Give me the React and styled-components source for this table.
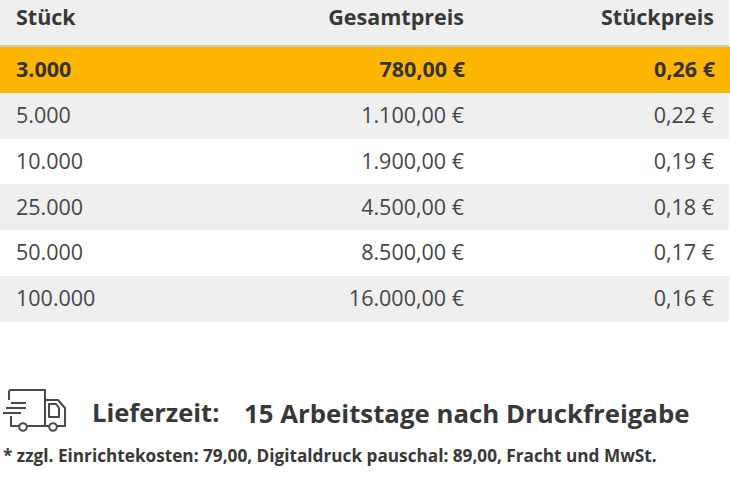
import React from "react";
import styled, { createGlobalStyle } from "styled-components";

const Global = createGlobalStyle`
  html, body { margin: 0; padding: 0; background: #ffffff; }
  body { font-family: "Open Sans", "Noto Sans", "Liberation Sans", sans-serif; color: #3d3d3d; }
`;

const Page = styled.div`
  width: 730px;
  display: flex;
  flex-direction: column;
`;

const Table = styled.div`
  width: 729px;
  display: flex;
  flex-direction: column;
`;

const HeaderRow = styled.div`
  display: grid;
  grid-template-columns: 1fr 250px 250px;
  height: 45px;
  background: #efefef;
  border-bottom: 2px solid #c8c8c8;
  font-weight: 700;
  font-size: 21.5px;
  line-height: 34px;
  color: #383838;
`;

const Row = styled.div`
  display: grid;
  grid-template-columns: 1fr 250px 250px;
  align-items: center;
  height: 45.83px;
  font-size: 21.5px;
  line-height: 1;
  background: ${(p) => (p.$active ? "#ffb600" : p.$shade ? "#efefef" : "#ffffff")};
  font-weight: ${(p) => (p.$active ? 700 : 400)};
  color: ${(p) => (p.$active ? "#333333" : "#464646")};
  width: ${(p) => (p.$active ? "730px" : "auto")};
`;

const Cell = styled.div`
  padding: 0 15px 2px 16px;
  text-align: ${(p) => (p.$right ? "right" : "left")};
  white-space: nowrap;
`;

const Delivery = styled.div`
  display: flex;
  align-items: flex-start;
  margin-top: 63px;
`;

const TruckIcon = styled.svg`
  width: 68px;
  height: 48px;
  flex: none;
`;

const DeliveryLabel = styled.div`
  margin: 10px 0 0 24px;
  font-size: 25.5px;
  font-weight: 700;
  color: #383838;
  width: 152px;
  white-space: nowrap;
`;

const DeliveryValue = styled.div`
  margin-top: 10px;
  font-size: 25.8px;
  font-weight: 700;
  color: #383838;
  white-space: nowrap;
`;

const Footnote = styled.div`
  margin-top: 11px;
  padding-left: 3px;
  font-size: 17.2px;
  font-weight: 700;
  color: #383838;
  white-space: nowrap;
`;

const rows = [
  ["3.000", "780,00 €", "0,26 €"],
  ["5.000", "1.100,00 €", "0,22 €"],
  ["10.000", "1.900,00 €", "0,19 €"],
  ["25.000", "4.500,00 €", "0,18 €"],
  ["50.000", "8.500,00 €", "0,17 €"],
  ["100.000", "16.000,00 €", "0,16 €"],
];

function Truck() {
  return (
    <TruckIcon viewBox="0 0 68 48" fill="none" stroke="#4a4a4a" strokeWidth="2" strokeLinejoin="round">
      <path d="M9 15 V7 Q9 5 11 5 H45 V41" />
      <path d="M11 18 H26 M6 23 H26 M3 28 H21" />
      <path d="M11 31 V41 H19" />
      <circle cx="23" cy="42" r="3.8" />
      <path d="M27 41 H49" />
      <circle cx="53" cy="42" r="3.8" />
      <path d="M45 15 H58 L65 23 V41 H57" />
      <path d="M49 19 H56 L59 23 V32 H49 Z" />
    </TruckIcon>
  );
}

export default function App() {
  return (
    <Page>
      <Global />
      <Table>
        <HeaderRow>
          <Cell>Stück</Cell>
          <Cell $right>Gesamtpreis</Cell>
          <Cell $right>Stückpreis</Cell>
        </HeaderRow>
        {rows.map((r, i) => (
          <Row key={r[0]} $active={i === 0} $shade={i % 2 === 1}>
            <Cell>{r[0]}</Cell>
            <Cell $right>{r[1]}</Cell>
            <Cell $right>{r[2]}</Cell>
          </Row>
        ))}
      </Table>
      <Delivery>
        <Truck />
        <DeliveryLabel>Lieferzeit:</DeliveryLabel>
        <DeliveryValue>15 Arbeitstage nach Druckfreigabe</DeliveryValue>
      </Delivery>
      <Footnote>* zzgl. Einrichtekosten: 79,00, Digitaldruck pauschal: 89,00, Fracht und MwSt.</Footnote>
    </Page>
  );
}
